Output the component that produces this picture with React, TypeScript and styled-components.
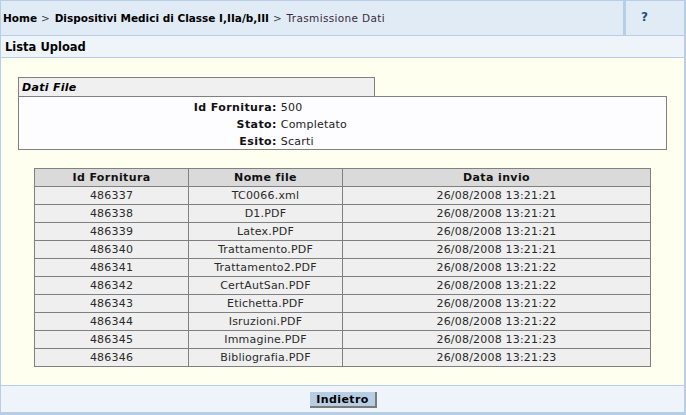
import styled, { createGlobalStyle } from "styled-components";

const GlobalStyle = createGlobalStyle`
  html, body {
    margin: 0;
    padding: 0;
    background: #ffffff;
  }
  body {
    font-family: "DejaVu Sans", Verdana, sans-serif;
    font-size: 11px;
    color: #000;
  }
`;

const rows = [
  ["486337", "TC0066.xml", "26/08/2008 13:21:21"],
  ["486338", "D1.PDF", "26/08/2008 13:21:21"],
  ["486339", "Latex.PDF", "26/08/2008 13:21:21"],
  ["486340", "Trattamento.PDF", "26/08/2008 13:21:21"],
  ["486341", "Trattamento2.PDF", "26/08/2008 13:21:22"],
  ["486342", "CertAutSan.PDF", "26/08/2008 13:21:22"],
  ["486343", "Etichetta.PDF", "26/08/2008 13:21:22"],
  ["486344", "Isruzioni.PDF", "26/08/2008 13:21:22"],
  ["486345", "Immagine.PDF", "26/08/2008 13:21:23"],
  ["486346", "Bibliografia.PDF", "26/08/2008 13:21:23"],
];

const info = [
  { label: "Id Fornitura:", value: "500" },
  { label: "Stato:", value: "Completato" },
  { label: "Esito:", value: "Scarti" },
];

const App = () => {
  return (
    <>
      <GlobalStyle />
      <Frame>
        <TopBar>
          <Breadcrumb>
            <Crumb>Home</Crumb>
            <Sep> &gt; </Sep>
            <Crumb>Dispositivi Medici di Classe I,IIa/b,III</Crumb>
            <Sep> &gt; </Sep>
            <Current>Trasmissione Dati</Current>
          </Breadcrumb>
          <HelpCell>?</HelpCell>
        </TopBar>
        <TitleBar>Lista Upload</TitleBar>
        <Content>
          <Fieldset>
            <Legend>Dati File</Legend>
            <InfoBox>
              {info.map((item) => (
                <InfoRow key={item.label}>
                  <InfoLabel>{item.label}</InfoLabel>
                  <InfoValue>{item.value}</InfoValue>
                </InfoRow>
              ))}
            </InfoBox>
          </Fieldset>
          <Grid>
            <thead>
              <tr>
                <Th $w="25%">Id Fornitura</Th>
                <Th $w="25%">Nome file</Th>
                <Th $w="50%">Data invio</Th>
              </tr>
            </thead>
            <tbody>
              {rows.map((r) => (
                <tr key={r[0]}>
                  {r.map((c, i) => (
                    <Td key={i}>{c}</Td>
                  ))}
                </tr>
              ))}
            </tbody>
          </Grid>
        </Content>
        <Footer>
          <Button>Indietro</Button>
        </Footer>
      </Frame>
    </>
  );
};

export default App;

const Frame = styled.div`
  width: 686px;
  height: 415px;
  box-sizing: border-box;
  border-top: 1px solid #b6cee6;
  border-left: 1px solid #b6cee6;
  border-right: 2px solid #b6cee6;
  border-bottom: 3px solid #b6cee6;
  display: flex;
  flex-direction: column;
`;

const TopBar = styled.div`
  display: flex;
  height: 34px;
  background: #e1ebf5;
  border-bottom: 1px solid #b6cee6;
`;

const Breadcrumb = styled.div`
  flex: 1;
  display: flex;
  align-items: center;
  padding-left: 2px;
  white-space: pre;
  font-size: 10.5px;
  color: #000;
`;

const Crumb = styled.span`
  font-weight: bold;
`;

const Sep = styled.span`
  color: #444;
  letter-spacing: 0.7px;
`;

const Current = styled.span`
  color: #3a2a3a;
  letter-spacing: 0.35px;
`;

const HelpCell = styled.div`
  width: 61px;
  border-left: 3px solid #b6cee6;
  display: flex;
  align-items: center;
  padding-left: 15px;
  box-sizing: border-box;
  font-weight: bold;
  color: #1f4f7f;
  font-size: 12px;
  padding-bottom: 3px;
`;

const TitleBar = styled.div`
  height: 21px;
  background: #eff4fa;
  border-bottom: 1px solid #b6cee6;
  display: flex;
  align-items: center;
  padding-left: 4px;
  font-weight: bold;
  font-size: 11.5px;
`;

const Content = styled.div`
  flex: 1;
  background: #fffff0;
  padding: 19px 17px 0 17px;
  border-bottom: 1px solid #b6cee6;
  display: flex;
  flex-direction: column;
  align-items: center;
`;

const Fieldset = styled.div`
  width: 100%;
  display: flex;
  flex-direction: column;
  margin-bottom: 18px;
`;

const Legend = styled.div`
  width: 357px;
  box-sizing: border-box;
  height: 19px;
  border: 1px solid #808080;
  border-bottom: none;
  background: #f0f0f0;
  font-weight: bold;
  font-style: italic;
  letter-spacing: 0.3px;
  padding-left: 3px;
  display: flex;
  align-items: center;
`;

const InfoBox = styled.div`
  border: 1px solid #808080;
  background: #fdfcff;
  padding-top: 1px;
`;

const InfoRow = styled.div`
  display: flex;
  height: 17px;
  padding-top: 1px;
  box-sizing: border-box;
  align-items: center;
`;

const InfoLabel = styled.div`
  width: 40%;
  text-align: right;
  font-weight: bold;
  letter-spacing: 0.4px;
  padding-right: 1px;
  box-sizing: border-box;
  color: #111;
`;

const InfoValue = styled.div`
  color: #222;
  padding-left: 3px;
  letter-spacing: 0.2px;
`;

const Grid = styled.table`
  width: 617px;
  border-collapse: collapse;
  border: 1px solid #808080;
`;

const Th = styled.th<{ $w: string }>`
  width: ${({ $w }) => $w};
  height: 17px;
  padding: 0;
  background: #dadada;
  border: 1px solid #808080;
  font-weight: bold;
  font-size: 11px;
  letter-spacing: 0.4px;
  color: #111;
`;

const Td = styled.td`
  height: 17px;
  padding: 0;
  background: #efefef;
  border: 1px solid #808080;
  text-align: center;
  letter-spacing: 0.2px;
  color: #2a2a2a;
`;

const Footer = styled.div`
  height: 26px;
  background: #eff4fa;
  display: flex;
  align-items: center;
  justify-content: center;
`;

const Button = styled.div`
  width: 65px;
  height: 14px;
  background: #b7cde4;
  border-right: 2px solid #7a7a7a;
  border-bottom: 2px solid #7a7a7a;
  font-weight: bold;
  letter-spacing: 0.4px;
  display: flex;
  align-items: center;
  justify-content: center;
  margin-top: 2px;
  margin-left: 2px;
`;
